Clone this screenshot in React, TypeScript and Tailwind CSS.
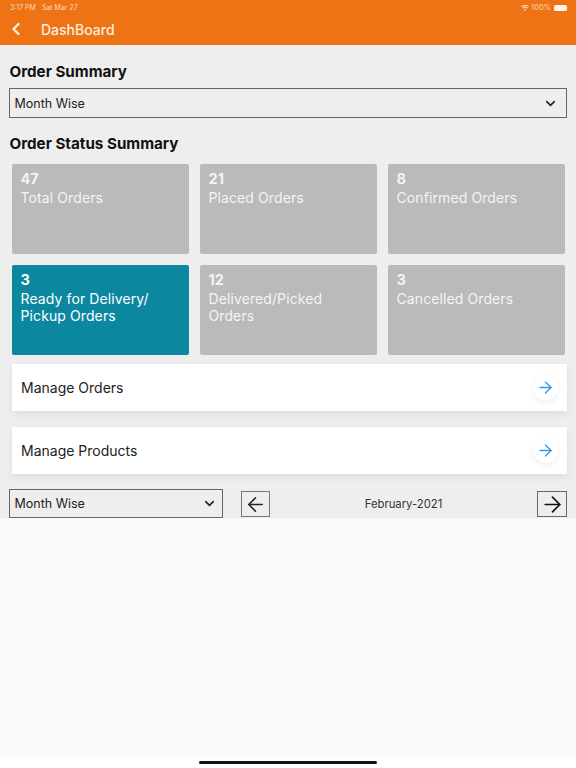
import { ArrowLeft, ArrowRight, ChevronDown, ChevronLeft } from 'lucide-react';

const cards = [
  { count: '47', label: 'Total Orders' },
  { count: '21', label: 'Placed Orders' },
  { count: '8', label: 'Confirmed Orders' },
  { count: '3', label: 'Ready for Delivery/ Pickup Orders', active: true },
  { count: '12', label: 'Delivered/Picked Orders' },
  { count: '3', label: 'Cancelled Orders' },
];

function ManageRow({ label }: { label: string }) {
  return (
    <div className="ml-[12px] h-[47px] w-[555px] flex items-center justify-between bg-white pl-[9px] pr-[9px] shadow-[0_3px_8px_rgba(0,0,0,0.07)]">
      <span className="text-[14px] text-[#222]">{label}</span>
      <div className="w-[25px] h-[25px] rounded-full bg-white flex items-center justify-center shadow-[0_2px_6px_rgba(0,0,0,0.08)]">
        <ArrowRight size={19} strokeWidth={1.6} className="text-[#2f96e8]" />
      </div>
    </div>
  );
}

export default function App() {
  return (
    <div className="w-[576px] h-[768px] overflow-hidden bg-white flex flex-col font-['Inter',sans-serif]">
      {/* Header */}
      <div className="h-[45px] bg-[#ee7314] text-white shrink-0">
        <div className="h-[14px] flex items-center justify-between pl-[10px] pr-[9px] text-[7px] text-[#fbd9bb]">
          <div className="flex gap-[6px] pt-[2px]">
            <span>3:17 PM</span>
            <span>Sat Mar 27</span>
          </div>
          <div className="flex items-center gap-[2px] pt-[2px]">
            <svg width="8" height="6" viewBox="0 0 16 12" fill="currentColor">
              <path d="M8 12 5.6 9a3.6 3.6 0 0 1 4.8 0ZM4.2 7.4 2.6 5.6a8 8 0 0 1 10.8 0l-1.6 1.8a5.6 5.6 0 0 0-7.6 0ZM1.4 4.2 0 2.6a12 12 0 0 1 16 0l-1.4 1.6a10 10 0 0 0-13.2 0Z" />
            </svg>
            <span className="text-[7.5px]">100%</span>
            <div className="w-[13px] h-[6px] rounded-[1.5px] bg-[#fff3e6] ml-[1px]" />
          </div>
        </div>
        <div className="flex items-center h-[31px] pb-[1px]">
          <ChevronLeft size={20} strokeWidth={2.8} className="ml-[6px] text-[#fdeee0]" />
          <span className="ml-[15px] text-[14px] font-medium text-[#fdeee0]">DashBoard</span>
        </div>
      </div>

      {/* Body */}
      <div className="h-[473px] bg-[#eeeeee] shrink-0 flex flex-col">
        <h2 className="mt-[18px] ml-[9.5px] text-[15.2px] leading-[18px] font-bold text-[#111]">Order Summary</h2>
        <div className="mt-[7px] ml-[9px] w-[558px] h-[30px] border border-[#666] flex items-center justify-between pl-[4.5px] pr-[8px]">
          <span className="pt-[2px] text-[12.5px] text-[#222]">Month Wise</span>
          <ChevronDown size={15} strokeWidth={2.6} className="text-[#222]" />
        </div>
        <h2 className="mt-[17px] ml-[9.5px] text-[15.2px] leading-[18px] font-bold text-[#111]">Order Status Summary</h2>

        <div className="mt-[11px] ml-[12px] grid grid-cols-[177px_177px_177px] gap-x-[11px] gap-y-[11px]">
          {cards.map((c) => (
            <div
              key={c.label}
              className={`h-[90px] rounded-[2px] pl-[8.5px] pt-[6px] ${c.active ? 'bg-[#0b879f] text-white' : 'bg-[#bababa] text-[#f4f4f4]'}`}
            >
              <div className="text-[14.5px] leading-[17px] font-bold">{c.count}</div>
              <div className="mt-[2px] w-[150px] text-[14px] tracking-[0.1px] leading-[17px]">{c.label}</div>
            </div>
          ))}
        </div>

        <div className="mt-[9px] flex flex-col gap-[16px]">
          <ManageRow label="Manage Orders" />
          <ManageRow label="Manage Products" />
        </div>

        <div className="mt-[15px] ml-[9px] flex items-start">
          <div className="w-[214px] h-[29px] border border-[#666] flex items-center justify-between pl-[4.5px] pr-[5px]">
            <span className="pt-[1px] text-[12.5px] text-[#222]">Month Wise</span>
            <ChevronDown size={15} strokeWidth={2.6} className="text-[#222]" />
          </div>
          <div className="ml-[18px] mt-[2px] w-[29px] h-[26px] border border-[#777] flex items-center justify-center">
            <ArrowLeft size={23} strokeWidth={1.6} className="text-[#222]" />
          </div>
          <div className="w-[267px] h-[29px] pt-[2px] flex items-center justify-center text-[11.3px] text-[#333]">February-2021</div>
          <div className="mt-[2px] w-[30px] h-[26px] border border-[#666] flex items-center justify-center">
            <ArrowRight size={25} strokeWidth={1.6} className="text-[#111]" />
          </div>
        </div>
      </div>

      {/* Empty area and home indicator */}
      <div className="h-[238px] bg-[#fafafa] shrink-0" />
      <div className="flex-1 bg-white flex justify-center">
        <div className="mt-[5px] w-[178px] h-[3px] rounded-full bg-[#111]" />
      </div>
    </div>
  );
}
